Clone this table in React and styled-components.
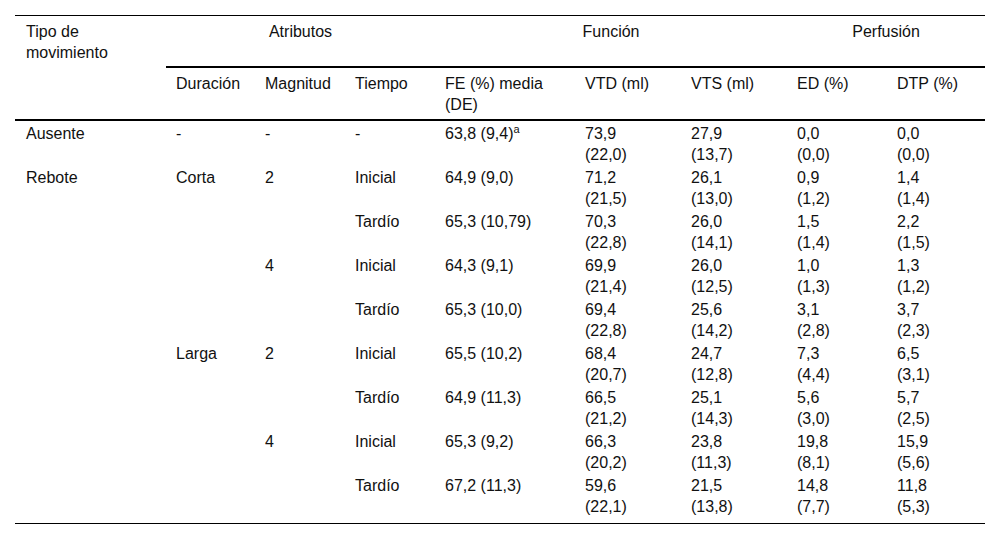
import React from 'react'
import styled, { createGlobalStyle } from 'styled-components'

const GlobalStyle = createGlobalStyle`
  html, body {
    margin: 0;
    padding: 0;
    background: #fff;
  }
  body {
    font-family: "Liberation Sans", Arial, sans-serif;
    font-size: 16px;
    color: #111;
  }
`

const widths = [151, 89, 90, 90, 140, 106, 106, 100, 98]

const rows = [
  { tipo: 'Ausente', dur: '-', mag: '-', tiempo: '-', fe: '63,8 (9,4)', sup: 'a', vals: [['73,9', '(22,0)'], ['27,9', '(13,7)'], ['0,0', '(0,0)'], ['0,0', '(0,0)']] },
  { tipo: 'Rebote', dur: 'Corta', mag: '2', tiempo: 'Inicial', fe: '64,9 (9,0)', vals: [['71,2', '(21,5)'], ['26,1', '(13,0)'], ['0,9', '(1,2)'], ['1,4', '(1,4)']] },
  { tiempo: 'Tardío', fe: '65,3 (10,79)', vals: [['70,3', '(22,8)'], ['26,0', '(14,1)'], ['1,5', '(1,4)'], ['2,2', '(1,5)']] },
  { mag: '4', tiempo: 'Inicial', fe: '64,3 (9,1)', vals: [['69,9', '(21,4)'], ['26,0', '(12,5)'], ['1,0', '(1,3)'], ['1,3', '(1,2)']] },
  { tiempo: 'Tardío', fe: '65,3 (10,0)', vals: [['69,4', '(22,8)'], ['25,6', '(14,2)'], ['3,1', '(2,8)'], ['3,7', '(2,3)']] },
  { dur: 'Larga', mag: '2', tiempo: 'Inicial', fe: '65,5 (10,2)', vals: [['68,4', '(20,7)'], ['24,7', '(12,8)'], ['7,3', '(4,4)'], ['6,5', '(3,1)']] },
  { tiempo: 'Tardío', fe: '64,9 (11,3)', vals: [['66,5', '(21,2)'], ['25,1', '(14,3)'], ['5,6', '(3,0)'], ['5,7', '(2,5)']] },
  { mag: '4', tiempo: 'Inicial', fe: '65,3 (9,2)', vals: [['66,3', '(20,2)'], ['23,8', '(11,3)'], ['19,8', '(8,1)'], ['15,9', '(5,6)']] },
  { tiempo: 'Tardío', fe: '67,2 (11,3)', vals: [['59,6', '(22,1)'], ['21,5', '(13,8)'], ['14,8', '(7,7)'], ['11,8', '(5,3)']] },
]

function App() {
  return (
    <React.Fragment>
      <GlobalStyle />
      <Page>
        <Table>
          <colgroup>
            {widths.map((w, i) => <col key={i} style={{ width: w }} />)}
          </colgroup>
          <thead>
            <tr>
              <TipoHead rowSpan={2}>Tipo de movimiento</TipoHead>
              <GroupHead colSpan={3}>Atributos</GroupHead>
              <GroupHead colSpan={3}>Función</GroupHead>
              <GroupHead colSpan={2}>Perfusión</GroupHead>
            </tr>
            <tr>
              <SubHead>Duración</SubHead>
              <SubHead>Magnitud</SubHead>
              <SubHead>Tiempo</SubHead>
              <SubHead>FE (%) media<br />(DE)</SubHead>
              <SubHead>VTD (ml)</SubHead>
              <SubHead>VTS (ml)</SubHead>
              <SubHead>ED (%)</SubHead>
              <SubHead>DTP (%)</SubHead>
            </tr>
          </thead>
          <tbody>
            {rows.map((r, i) => (
              <Row key={i} $last={i === rows.length - 1}>
                <Cell>{r.tipo}</Cell>
                <Cell>{r.dur}</Cell>
                <Cell>{r.mag}</Cell>
                <Cell>{r.tiempo}</Cell>
                <Cell>{r.fe}{r.sup && <Sup>{r.sup}</Sup>}</Cell>
                {r.vals.map((v, j) => (
                  <Cell key={j}>
                    <Line>{v[0]}</Line>
                    <Line>{v[1]}</Line>
                  </Cell>
                ))}
              </Row>
            ))}
          </tbody>
        </Table>
      </Page>
    </React.Fragment>
  )
}

export default App

const Page = styled.div`
    padding: 15px 15px 0 15px;
    width: 970px;
`

const Table = styled.table`
    width: 970px;
    table-layout: fixed;
    border-collapse: separate;
    border-spacing: 0;
    line-height: 21px;
    font-size: 16px;
`

const TipoHead = styled.th`
    font-weight: normal;
    text-align: left;
    vertical-align: top;
    padding: 5px 10px 0 11px;
    border-top: 1px solid #000;
    border-bottom: 2px solid #000;
`

const GroupHead = styled.th`
    font-weight: normal;
    text-align: center;
    vertical-align: top;
    padding: 5px 10px 24px 10px;
    border-top: 1px solid #000;
    border-bottom: 2px solid #000;
`

const SubHead = styled.th`
    font-weight: normal;
    text-align: left;
    vertical-align: top;
    padding: 5px 10px 4px 10px;
    height: 42px;
    border-bottom: 2px solid #000;
`

const Row = styled.tr`
    td {
        padding-bottom: ${p => (p.$last ? '6px' : '0')};
        border-bottom: ${p => (p.$last ? '1px solid #000' : 'none')};
    }
    td:first-child {
        padding-left: 11px;
    }
`

const Cell = styled.td`
    vertical-align: top;
    text-align: left;
    padding: 2px 10px 0 10px;
    height: 42px;
    white-space: nowrap;
`

const Line = styled.div`
    display: block;
`

const Sup = styled.sup`
    font-size: 11px;
    line-height: 0;
    vertical-align: 6px;
`
